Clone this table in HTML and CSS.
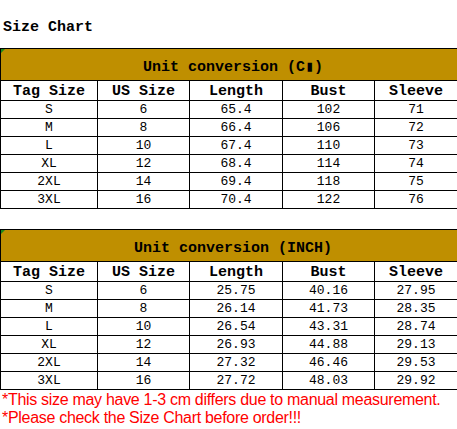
FILE: index.html
```html
<!DOCTYPE html>
<html>
<head>
<meta charset="utf-8">
<link rel="stylesheet" href="styles.css">
</head>
<body>
<div class="title">Size Chart</div>
<table class="chart first">
  <colgroup><col class="c1"><col class="c2"><col class="c3"><col class="c4"><col class="c5"></colgroup>
  <tr class="band"><th colspan="5"><span class="flag"></span>Unit conversion (C&#9646;)</th></tr>
  <tr class="head"><th>Tag Size</th><th>US Size</th><th>Length</th><th>Bust</th><th>Sleeve</th></tr>
  <tr><td>S</td><td>6</td><td>65.4</td><td>102</td><td>71</td></tr>
  <tr><td>M</td><td>8</td><td>66.4</td><td>106</td><td>72</td></tr>
  <tr><td>L</td><td>10</td><td>67.4</td><td>110</td><td>73</td></tr>
  <tr><td>XL</td><td>12</td><td>68.4</td><td>114</td><td>74</td></tr>
  <tr><td>2XL</td><td>14</td><td>69.4</td><td>118</td><td>75</td></tr>
  <tr><td>3XL</td><td>16</td><td>70.4</td><td>122</td><td>76</td></tr>
</table>
<table class="chart second">
  <colgroup><col class="c1"><col class="c2"><col class="c3"><col class="c4"><col class="c5"></colgroup>
  <tr class="band"><th colspan="5"><span class="flag"></span>Unit conversion (INCH)</th></tr>
  <tr class="head"><th>Tag Size</th><th>US Size</th><th>Length</th><th>Bust</th><th>Sleeve</th></tr>
  <tr><td>S</td><td>6</td><td>25.75</td><td>40.16</td><td>27.95</td></tr>
  <tr><td>M</td><td>8</td><td>26.14</td><td>41.73</td><td>28.35</td></tr>
  <tr><td>L</td><td>10</td><td>26.54</td><td>43.31</td><td>28.74</td></tr>
  <tr><td>XL</td><td>12</td><td>26.93</td><td>44.88</td><td>29.13</td></tr>
  <tr><td>2XL</td><td>14</td><td>27.32</td><td>46.46</td><td>29.53</td></tr>
  <tr><td>3XL</td><td>16</td><td>27.72</td><td>48.03</td><td>29.92</td></tr>
</table>
<div class="note">
  <p>*This size may have 1-3 cm differs due to manual measurement.</p>
  <p>*Please check the Size Chart before order!!!</p>
</div>
</body>
</html>
```
FILE: styles.css
```css
html, body {
  margin: 0;
  padding: 0;
  background: #ffffff;
}
body {
  font-family: "Liberation Mono", "DejaVu Sans Mono", monospace;
  color: #000;
}
.title {
  margin-top: 19px;
  padding-left: 3px;
  font-size: 15px;
  font-weight: bold;
  line-height: 18px;
  height: 18px;
}
.chart {
  border-collapse: collapse;
  table-layout: fixed;
  width: 457px;
}
.first { margin-top: 11px; }
.second { margin-top: 20px; }
.c1 { width: 97px; }
.c2 { width: 92px; }
.c3 { width: 93px; }
.c4 { width: 92px; }
.c5 { width: 83px; }
.chart th, .chart td {
  border: 1px solid #000;
  padding: 0;
  text-align: center;
  overflow: hidden;
  white-space: nowrap;
}
.chart tr { height: 18px; }
.chart tr.band { height: 32px; }
.chart tr.head { height: 19px; }
.band th {
  position: relative;
  background: #bf8f00;
  font-size: 15px;
  font-weight: bold;
  line-height: 17px;
  padding-left: 8px;
  padding-top: 5px;
}
.flag {
  position: absolute;
  left: 0;
  top: 0;
  width: 0;
  height: 0;
  border-top: 4px solid #1a8a1a;
  border-right: 4px solid transparent;
}
.head th {
  font-size: 15px;
  font-weight: bold;
  line-height: 17px;
  padding-top: 2px;
}
.chart td {
  font-size: 13px;
  line-height: 16px;
  padding-top: 1px;
}
.note {
  color: #ff0000;
  font-family: "Liberation Sans", Arial, sans-serif;
  font-size: 16px;
  letter-spacing: -0.3px;
  line-height: 18px;
  padding-left: 2px;
  margin-top: 1px;
  white-space: nowrap;
}
.note p { margin: 0; }
```
